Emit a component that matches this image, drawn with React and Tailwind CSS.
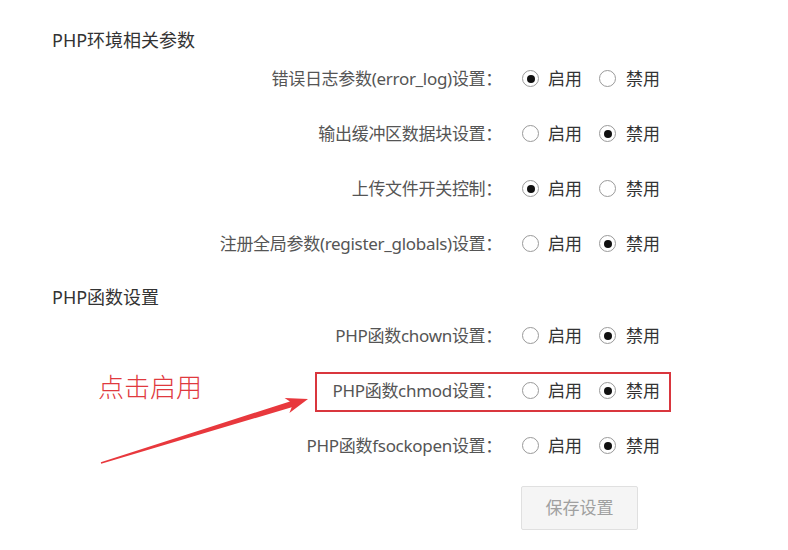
import React from "react";

const font = { fontFamily: '"Noto Sans", "Noto Sans CJK SC", sans-serif' };

function Radio({ checked }) {
  return (
    <span className="flex h-[17px] w-[17px] items-center justify-center rounded-full border border-[#9a9a9a] bg-white">
      {checked && <span className="h-[8px] w-[8px] rounded-full bg-[#111]" />}
    </span>
  );
}

function Row({ label, on, children }) {
  return (
    <div className="relative flex h-[55px] items-center">
      <div className="w-[506px] shrink-0 pr-[4px] text-right text-[17px] text-[#555] tracking-[-0.3px]">{label}</div>
      <div className="ml-[16px] flex items-center text-[17px] text-[#333]">
        <Radio checked={on} />
        <span className="ml-[9px]">启用</span>
        <span className="ml-[17px]"><Radio checked={!on} /></span>
        <span className="ml-[10px]">禁用</span>
      </div>
      {children}
    </div>
  );
}

export default function App() {
  return (
    <div className="relative h-[550px] w-[788px] overflow-hidden bg-white" style={font}>
      <div className="ml-[52px] mt-[29px] h-[22px] text-[18px] leading-[22px] text-[#333]">PHP环境相关参数</div>
      <Row label="错误日志参数(error_log)设置：" on={true} />
      <Row label="输出缓冲区数据块设置：" on={false} />
      <Row label="上传文件开关控制：" on={true} />
      <Row label="注册全局参数(register_globals)设置：" on={false} />
      <div className="ml-[52px] mt-[15px] h-[22px] text-[18px] leading-[22px] text-[#333]">PHP函数设置</div>
      <Row label="PHP函数chown设置：" on={false} />
      <Row label="PHP函数chmod设置：" on={false}>
        <div className="pointer-events-none absolute left-[315px] top-[9px] h-[40px] w-[356px] border-2 border-[#d9363e]" />
      </Row>
      <Row label="PHP函数fsockopen设置：" on={false} />
      <div className="ml-[521px] mt-[13px] flex h-[44px] w-[117px] items-center justify-center rounded-[2px] border border-[#e0e0e0] bg-[#f5f5f5] text-[17px] text-[#a0a0a0]">
        保存设置
      </div>

      <div className="absolute left-[98px] top-[370px] text-[26px] leading-[34px] text-[#e0393e] font-light">点击启用</div>
      <svg className="pointer-events-none absolute left-0 top-0" width="788" height="550">
        <polygon
          points="101.2,463.7 291.7,407.2 289.4,413.1 308,399 284.6,397.9 289.9,401.4 100.8,462.3"
          fill="#e8383d"
        />
      </svg>
    </div>
  );
}
